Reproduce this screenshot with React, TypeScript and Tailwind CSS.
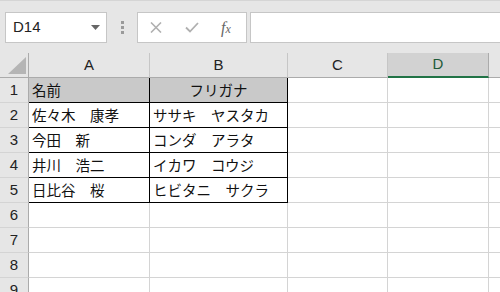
import React from 'react';

const jp = { fontFamily: '"Noto Sans CJK JP", "Noto Sans", sans-serif' };
const latin = { fontFamily: '"Liberation Sans", Arial, sans-serif' };

const rows: [string, string][] = [
  ['名前', 'フリガナ'],
  ['佐々木　康孝', 'ササキ　ヤスタカ'],
  ['今田　新', 'コンダ　アラタ'],
  ['井川　浩二', 'イカワ　コウジ'],
  ['日比谷　桜', 'ヒビタニ　サクラ'],
];

function Toolbar() {
  return (
    <div className="h-[53px] bg-[#e6e6e6] border-t border-[#d5d5d5] flex items-start pt-[11px]">
      <div className="ml-[5px] w-[102px] h-[31px] bg-white border border-[#c6c6c6] flex items-center justify-between pl-[7px] pr-[6px]">
        <span className="text-[15px] text-[#222]" style={latin}>D14</span>
        <svg width="9" height="5" viewBox="0 0 9 5">
          <path d="M0 0 H9 L4.5 5 Z" fill="#666" />
        </svg>
      </div>
      <div className="w-[30px] h-[31px] flex flex-col items-center justify-center gap-[2px]">
        <span className="w-[3px] h-[3px] bg-[#9a9a9a]" />
        <span className="w-[3px] h-[3px] bg-[#9a9a9a]" />
        <span className="w-[3px] h-[3px] bg-[#9a9a9a]" />
      </div>
      <div className="w-[110px] h-[31px] bg-white border border-[#c6c6c6] flex items-center">
        <svg className="ml-[12px]" width="12" height="11" viewBox="0 0 12 11">
          <path d="M1 0.5 L11 10.5 M11 0.5 L1 10.5" stroke="#b0b0b0" strokeWidth="1.6" />
        </svg>
        <svg className="ml-[23px]" width="14" height="11" viewBox="0 0 14 11">
          <path d="M1 5.5 L5 9.5 L13 1" stroke="#b0b0b0" strokeWidth="1.8" fill="none" />
        </svg>
        <span
          className="ml-[22px] text-[16px] leading-none italic text-[#666]"
          style={{ fontFamily: '"Liberation Serif", serif' }}
        >
          f<span className="text-[12px]">x</span>
        </span>
      </div>
      <div className="ml-[3px] flex-1 h-[31px] bg-white border border-[#c6c6c6] border-r-0" />
    </div>
  );
}

function ColHeader({ label, w, selected }: { label: string; w: string; selected?: boolean }) {
  return (
    <div
      className={`${w} h-full shrink-0 flex items-center justify-center border-r text-[15px] ${
        selected
          ? 'bg-[#d2d2d2] border-[#ababab] border-b-2 border-b-[#217346] text-[#1e5b3a]'
          : 'border-[#c6c6c6] border-b border-b-[#ababab] text-[#222]'
      }`}
      style={latin}
    >
      {label}
    </div>
  );
}

export default function App() {
  return (
    <div className="w-[500px] h-[292px] overflow-hidden bg-white">
      <Toolbar />
      <div className="h-[25px] flex bg-[#e6e6e6]">
        <div className="w-[29px] h-full shrink-0 border-r border-b border-[#ababab] relative">
          <svg className="absolute left-[8px] top-[4px]" width="18" height="17" viewBox="0 0 18 17">
            <path d="M18 0 V17 H0 Z" fill="#b5b5b5" />
          </svg>
        </div>
        <ColHeader label="A" w="w-[121px]" />
        <ColHeader label="B" w="w-[138px]" />
        <ColHeader label="C" w="w-[100px]" />
        <ColHeader label="D" w="w-[101px]" selected />
        <div className="flex-1 h-full border-b border-[#ababab]" />
      </div>
      {Array.from({ length: 9 }).map((_, i) => {
        const data = rows[i];
        const inTable = !!data;
        const head = i === 0;
        return (
          <div key={i} className="h-[25px] flex">
            <div
              className="w-[29px] h-full shrink-0 bg-[#e6e6e6] border-r border-r-[#ababab] border-b border-b-[#d4d4d4] flex items-center justify-center text-[15px] text-[#222]"
              style={latin}
            >
              {i + 1}
            </div>
            <div
              className={`w-[121px] h-full shrink-0 border-r border-b flex items-center pl-[3px] text-[14.5px] text-[#111] ${
                inTable ? 'border-black' : 'border-[#d4d4d4]'
              } ${head ? 'bg-[#c9c9c9]' : ''}`}
              style={jp}
            >
              {data ? data[0] : ''}
            </div>
            <div
              className={`w-[138px] h-full shrink-0 border-r border-b flex items-center text-[14.5px] text-[#111] ${
                inTable ? 'border-black' : 'border-[#d4d4d4]'
              } ${head ? 'bg-[#c9c9c9] justify-center' : 'pl-[3px]'}`}
              style={jp}
            >
              {data ? data[1] : ''}
            </div>
            <div className="w-[100px] h-full shrink-0 border-r border-b border-[#d4d4d4]" />
            <div className="w-[101px] h-full shrink-0 border-r border-b border-[#d4d4d4]" />
            <div className="flex-1 h-full border-b border-[#d4d4d4]" />
          </div>
        );
      })}
    </div>
  );
}
